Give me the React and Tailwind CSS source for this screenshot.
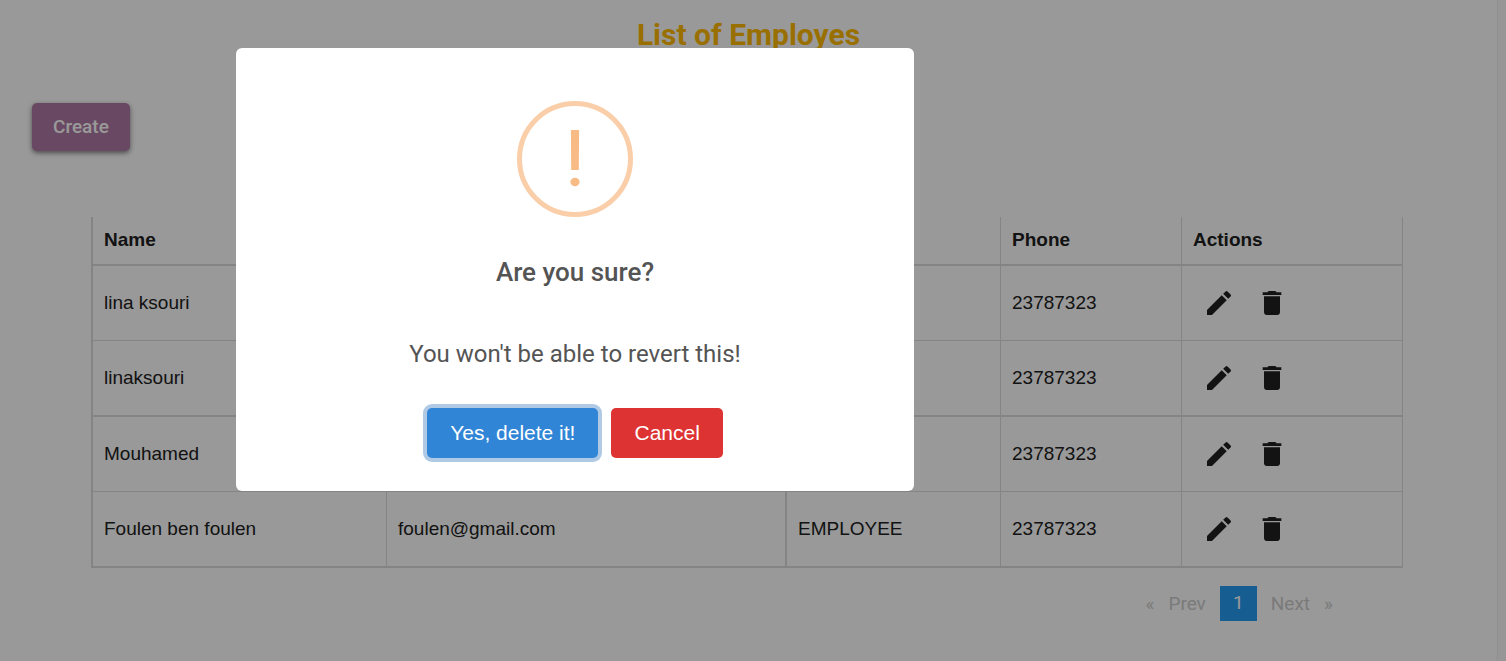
import { MdEdit, MdDelete } from "react-icons/md";

const employees = [
  { name: "lina ksouri", email: "lina@gmail.com", role: "EMPLOYEE", phone: "23787323" },
  { name: "linaksouri", email: "linaksouri@gmail.com", role: "EMPLOYEE", phone: "23787323" },
  { name: "Mouhamed", email: "mouhamed@gmail.com", role: "EMPLOYEE", phone: "23787323" },
  { name: "Foulen ben foulen", email: "foulen@gmail.com", role: "EMPLOYEE", phone: "23787323" },
];

const cell = "border-r border-[#ddd] px-[11px] text-left [&:nth-child(2)]:border-r-2";

function EmployeeTable() {
  return (
    <table className="w-full table-fixed border-separate border-spacing-0 border-l-2 border-[#ddd] font-['Liberation_Sans',Arial,sans-serif] text-[19px] leading-6 text-[#212121]">
      <colgroup>
        <col className="w-[294px]" />
        <col className="w-[400px]" />
        <col className="w-[214px]" />
        <col className="w-[181px]" />
        <col className="w-[221px]" />
      </colgroup>
      <thead>
        <tr className="h-[49px]">
          {["Name", "Email", "Role", "Phone", "Actions"].map((h) => (
            <th key={h} scope="col" className={`${cell} border-b-2 pb-0.5 font-bold`}>
              {h}
            </th>
          ))}
        </tr>
      </thead>
      <tbody>
        {employees.map((e) => (
          <tr key={e.name} className="h-[75px] even:h-[76px] [&>td]:border-b even:[&>td]:border-b-2">
            <td className={cell}>{e.name}</td>
            <td className={cell}>{e.email}</td>
            <td className={cell}>{e.role}</td>
            <td className={cell}>{e.phone}</td>
            <td className={cell}>
              <div className="flex gap-px">
                <button type="button" aria-label={`Edit ${e.name}`} className="p-[10px]">
                  <MdEdit className="size-8" />
                </button>
                <button type="button" aria-label={`Delete ${e.name}`} className="p-[10px]">
                  <MdDelete className="size-8" />
                </button>
              </div>
            </td>
          </tr>
        ))}
      </tbody>
    </table>
  );
}

function Pagination() {
  return (
    <nav aria-label="Pagination" className="mt-[18px] flex items-center justify-end pr-[63px] text-[19px] leading-[34px] text-[#ccc]">
      <a href="#first" className="px-[7px]">«</a>
      <a href="#prev" className="px-[7px]">Prev</a>
      <a href="#page-1" aria-current="page" className="mx-[7px] w-[37px] bg-[#259df3] pb-px text-center text-white">1</a>
      <a href="#next" className="px-[7px]">Next</a>
      <a href="#last" className="px-[7px]">»</a>
    </nav>
  );
}

function ConfirmDialog() {
  return (
    <div className="fixed inset-0 flex items-start bg-black/40 pl-[236px] pt-12">
      <div
        role="dialog"
        aria-modal="true"
        aria-labelledby="confirm-title"
        className="flex w-[678px] flex-col items-center rounded-md bg-white pb-[33px] pt-[53px]"
      >
        <svg viewBox="0 0 116 116" className="size-[116px]" aria-hidden="true">
          <circle cx="58" cy="58" r="55.5" fill="none" stroke="#facea8" strokeWidth="5" />
          <path d="M53.9 29h8.2l-.3 40h-7.6z" fill="#f8bb86" />
          <ellipse cx="58" cy="81" rx="4.6" ry="4.2" fill="#f8bb86" />
        </svg>
        <h2 id="confirm-title" className="mt-[37px] text-[26px] font-medium leading-9 text-[#545454]">
          Are you sure?
        </h2>
        <p className="mt-[46px] text-2xl leading-9 text-[#545454]">You won't be able to revert this!</p>
        <div className="mt-9 flex gap-[13px] font-['Liberation_Sans',Arial,sans-serif] text-[21px] leading-[50px] text-white">
          <button type="button" className="rounded-[5px] bg-[#3085d6] px-[23px] shadow-[0_0_0_4px_#b0cae6]">
            Yes, delete it!
          </button>
          <button type="button" className="rounded-[5px] bg-[#dd3333] px-[23px]">
            Cancel
          </button>
        </div>
      </div>
    </div>
  );
}

export default function App() {
  return (
    <div className="min-h-screen bg-[#fafafa] pr-2 font-[Roboto,sans-serif]">
      <main className="min-h-screen rounded-br border-r border-[#eee] bg-white pb-10 pt-[17px]">
        <h1 className="text-center text-[30px] font-bold leading-9 text-[#ffbb00]">List of Employes</h1>
        <button
          type="button"
          className="ml-8 mt-[50px] block rounded-[5px] bg-[#af78a5] px-[21px] text-[19px] font-medium leading-[48px] text-white shadow-[0_2px_5px_rgba(0,0,0,0.5)]"
        >
          Create
        </button>
        <div className="mt-[66px] pl-[91px] pr-[94px]">
          <EmployeeTable />
          <Pagination />
        </div>
      </main>
      <ConfirmDialog />
    </div>
  );
}
